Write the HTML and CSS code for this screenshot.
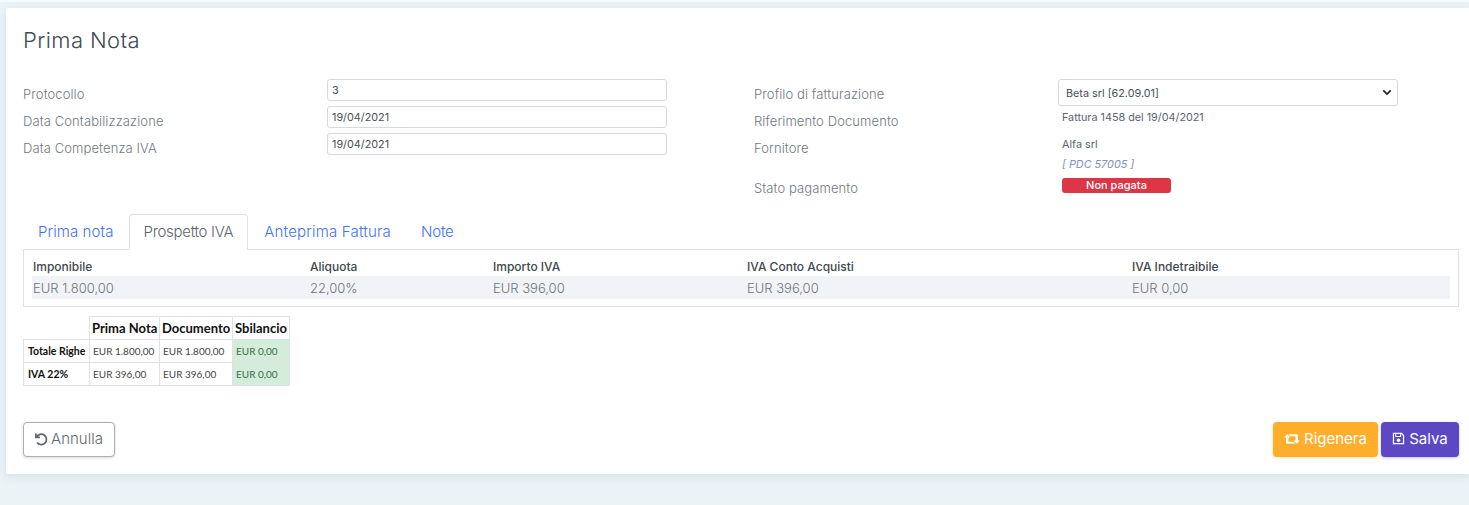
FILE: index.html
```html
<!DOCTYPE html>
<html>
	<head>
		<meta charset="UTF-8">
		<title>Prima Nota</title>
		<link rel="stylesheet" href="styles.css">
	</head>
	<body>
		<div class="card">
			<h1 class="title">Prima Nota</h1>
			<div class="form">
				<div class="form-col">
					<div class="row">
						<label class="lbl">Protocollo</label>
						<input class="inp" type="text" value="3">
					</div>
					<div class="row">
						<label class="lbl">Data Contabilizzazione</label>
						<input class="inp" type="text" value="19/04/2021">
					</div>
					<div class="row">
						<label class="lbl">Data Competenza IVA</label>
						<input class="inp" type="text" value="19/04/2021">
					</div>
				</div>
				<div class="form-col">
					<div class="row">
						<label class="lbl">Profilo di fatturazione</label>
						<select class="sel"><option>Beta srl [62.09.01]</option></select>
					</div>
					<div class="row">
						<label class="lbl">Riferimento Documento</label>
						<div class="val">Fattura 1458 del 19/04/2021</div>
					</div>
					<div class="row row-tall">
						<label class="lbl">Fornitore</label>
						<div class="val">
							Alfa srl
							<a class="pdc">[ PDC 57005 ]</a>
						</div>
					</div>
					<div class="row">
						<label class="lbl">Stato pagamento</label>
						<div class="val"><span class="badge">Non pagata</span></div>
					</div>
				</div>
			</div>

			<ul class="tabs">
				<li class="tab">Prima nota</li>
				<li class="tab active">Prospetto IVA</li>
				<li class="tab">Anteprima Fattura</li>
				<li class="tab">Note</li>
			</ul>
			<div class="panel">
				<div class="iva-row iva-head">
					<div>Imponibile</div>
					<div>Aliquota</div>
					<div>Importo IVA</div>
					<div>IVA Conto Acquisti</div>
					<div>IVA Indetraibile</div>
				</div>
				<div class="iva-row iva-vals">
					<div>EUR 1.800,00</div>
					<div>22,00%</div>
					<div>EUR 396,00</div>
					<div>EUR 396,00</div>
					<div>EUR 0,00</div>
				</div>
			</div>

			<table class="check">
				<tr>
					<th class="blank"></th>
					<th>Prima Nota</th>
					<th>Documento</th>
					<th>Sbilancio</th>
				</tr>
				<tr>
					<th class="side">Totale Righe</th>
					<td>EUR 1.800,00</td>
					<td>EUR 1.800,00</td>
					<td class="ok">EUR 0,00</td>
				</tr>
				<tr>
					<th class="side">IVA 22%</th>
					<td>EUR 396,00</td>
					<td>EUR 396,00</td>
					<td class="ok">EUR 0,00</td>
				</tr>
			</table>

			<div class="actions">
				<button class="btn btn-back">
					<svg class="ico ico-back" viewBox="0 0 16 16"><path d="M2.2 1.6v4.6h4.6" fill="none" stroke="currentColor" stroke-width="2"/><path d="M3 5.6A6 6 0 1 1 3.4 12" fill="none" stroke="currentColor" stroke-width="2"/></svg>
					Annulla
				</button>
				<div class="actions-right">
					<button class="btn btn-regen">
						<svg class="ico ico-wide" viewBox="0 0 20 14"><path d="M4 1L8 5.2H5.6V10.5H12L14.5 13H3.6Q2.6 13 2.6 12V5.2H0Z" fill="currentColor"/><path d="M16 13L12 8.8H14.4V3.5H8L5.5 1H16.4Q17.4 1 17.4 2V8.8H20Z" fill="currentColor"/></svg>
						Rigenera
					</button>
					<button class="btn btn-save">
						<svg class="ico" viewBox="0 0 16 16"><path d="M1.8 1.8h10L14.2 4.2V14.2H1.8z" fill="none" stroke="currentColor" stroke-width="1.5"/><path d="M4.6 2v3.6h6V2" fill="none" stroke="currentColor" stroke-width="1.3"/><circle cx="8" cy="10.2" r="2.2" fill="currentColor"/></svg>
						Salva
					</button>
				</div>
			</div>
		</div>
	</body>
</html>
```

FILE: styles.css
```css
*{
	box-sizing: border-box;
}
body{
	margin: 0;
	padding: 6px 0 31px 6px;
	border-top: 2px solid #f8fafc;
	background-color: #ecf3f7;
	font-family: "Inter", "Liberation Sans", sans-serif;
	color: #6c757d;
}
.card{
	height: 466px;
	padding: 0 10px 0 17px;
	background-color: #fff;
	border-radius: 3px 0 0 3px;
	box-shadow: 0 3px 10px rgba(90,110,125,.14);
}
.title{
	margin: 0;
	padding-top: 19px;
	height: 71px;
	font-size: 22px;
	line-height: 27px;
	font-weight: 300;
	letter-spacing: .4px;
	color: #3f4b54;
}
.form{
	display: flex;
	gap: 87px;
	height: 135px;
}
.form-col{
	width: 644px;
}
.row{
	display: flex;
	height: 27px;
}
.row-tall{
	height: 40px;
}
.lbl{
	width: 304px;
	padding-top: 6px;
	font-size: 13px;
	line-height: 18px;
	font-weight: 300;
	letter-spacing: .1px;
	color: #6f787f;
}
.inp{
	width: 340px;
	height: 22px;
	padding: 0 4px;
	border: 1px solid #d5dae0;
	border-radius: 3px;
	font-family: inherit;
	font-size: 10.8px;
	color: #495057;
	background: #fff;
}
.sel{
	width: 340px;
	height: 27px;
	padding: 2px 7px 0;
	border: 1px solid #d5dae0;
	border-radius: 3px;
	font-family: inherit;
	font-size: 10.8px;
	color: #495057;
	appearance: none;
	background: #fff url("data:image/svg+xml,%3Csvg xmlns='http://www.w3.org/2000/svg' viewBox='0 0 12 8'%3E%3Cpath d='M1.5 1.5L6 6l4.5-4.5' fill='none' stroke='%23222' stroke-width='2'/%3E%3C/svg%3E") no-repeat right 5px center / 10px 7px;
}
.val{
	width: 340px;
	padding: 4px 0 0 4px;
	font-size: 10.8px;
	line-height: 16px;
	color: #5b6470;
}
.pdc{
	display: block;
	margin-top: 4px;
	font-style: italic;
	color: #7a92c4;
}
.badge{
	display: block;
	width: 109px;
	height: 15px;
	margin-top: 1px;
	border-radius: 3px;
	background-color: #dc3545;
	color: #fff;
	text-align: center;
	font-size: 11px;
	line-height: 14px;
	font-weight: 500;
}
.tabs{
	display: flex;
	margin: 0;
	padding: 0;
	height: 36px;
	list-style: none;
	border-bottom: 1px solid #dee2e6;
}
.tab{
	padding: 0 14px;
	height: 36px;
	border: 1px solid transparent;
	border-radius: 4px 4px 0 0;
	font-size: 15px;
	line-height: 34px;
	font-weight: 300;
	letter-spacing: .2px;
	color: #3f73f5;
}
.tab:first-child{
	letter-spacing: .1px;
}
.tab:last-child{
	letter-spacing: -.2px;
}
.active{
	margin-right: 1px;
	letter-spacing: -.3px;
	color: #5c656c;
	background-color: #fff;
	border-color: #dee2e6 #dee2e6 #fff;
}
.panel{
	height: 57px;
	padding: 7px 8px 0;
	border: 1px solid #dee2e6;
	border-top: 0;
}
.iva-row{
	display: grid;
	grid-template-columns: 277px 183px 254px 385px 1fr;
	padding-left: 1px;
}
.iva-head{
	height: 19px;
	font-size: 12px;
	line-height: 19px;
	font-weight: 500;
	color: #3f474d;
}
.iva-vals{
	height: 23px;
	background-color: #f2f3f6;
	font-size: 13px;
	line-height: 24px;
	font-weight: 300;
	color: #6f757c;
}
.check{
	margin-top: 9px;
	border-collapse: collapse;
	font-family: "Lato", "Liberation Sans", sans-serif;
	font-size: 10px;
	table-layout: fixed;
	width: 267px;
}
.check th, .check td{
	height: 23px;
	padding: 0 2px;
	border: 1px solid #dee2e6;
	text-align: left;
	white-space: nowrap;
}
.check td{
	padding-left: 3px;
}
.check th{
	font-size: 13px;
	color: #111;
}
.check th:nth-child(1){
	width: 66px;
}
.check th:nth-child(2){
	width: 70px;
}
.check th:nth-child(3){
	width: 73px;
}
.check .blank{
	border-top: 0;
	border-left: 0;
}
.check .side{
	font-size: 10.5px;
	padding-left: 4px;
}
.check td{
	color: #444;
}
.check .ok{
	background-color: #d4edda;
	color: #3d6b48;
}
.actions{
	display: flex;
	justify-content: space-between;
	margin-top: 36px;
}
.actions-right{
	display: flex;
	gap: 3px;
}
.btn{
	display: flex;
	align-items: center;
	justify-content: center;
	gap: 4px;
	height: 35px;
	padding: 0 0 2px;
	border-radius: 4px;
	font-family: inherit;
	font-size: 15px;
	font-weight: 300;
}
.ico{
	width: 13px;
	height: 13px;
}
.ico-back{
	width: 14px;
	height: 14px;
}
.ico-wide{
	width: 16px;
	height: 12px;
}
.btn-back{
	width: 92px;
	gap: 3px;
	padding-right: 1px;
	border: 1px solid #a9afb5;
	background-color: #fff;
	color: #5f686f;
	box-shadow: 0 1px 3px rgba(0,0,0,.15);
}
.btn-regen{
	width: 105px;
	border: 0;
	background-color: #ffae2b;
	color: #fff;
	font-weight: 400;
	box-shadow: 0 1px 3px rgba(255,174,43,.35);
}
.btn-save{
	width: 78px;
	border: 0;
	background-color: #5c48c2;
	color: #fff;
	font-weight: 400;
	box-shadow: 0 1px 3px rgba(92,72,194,.35);
}
```
